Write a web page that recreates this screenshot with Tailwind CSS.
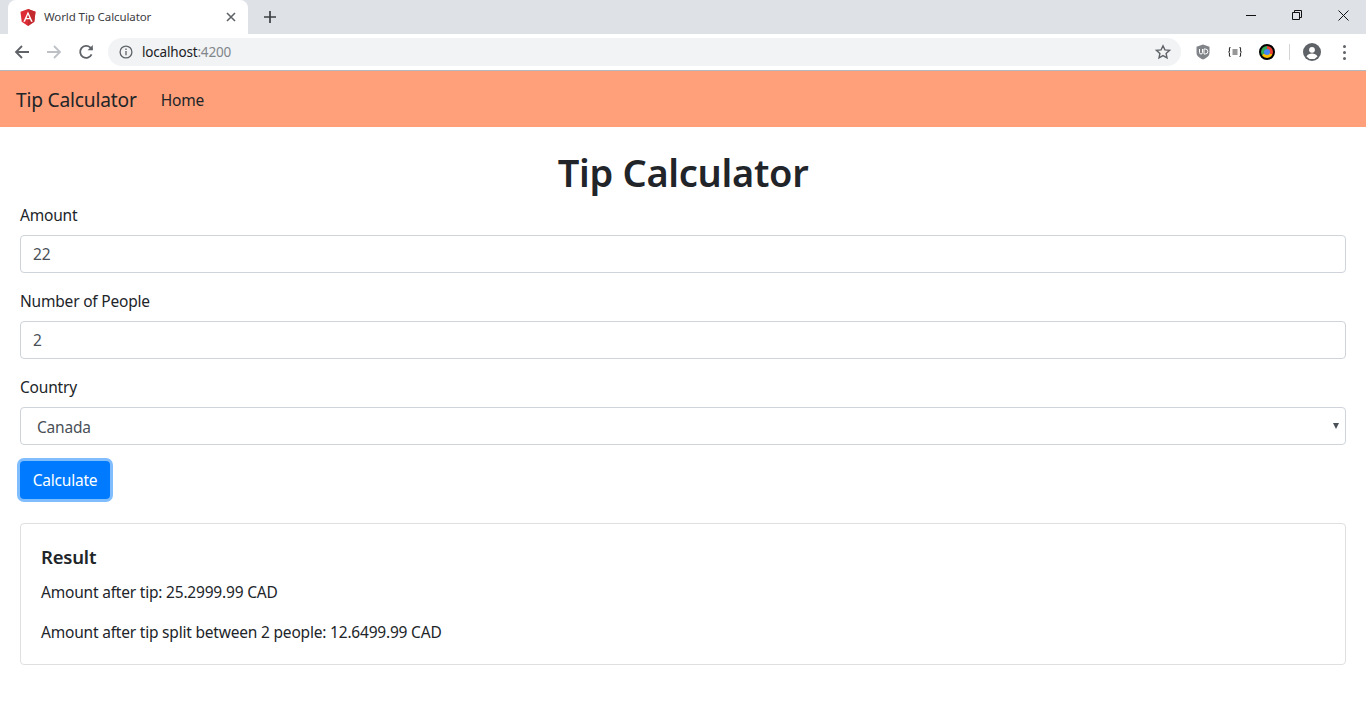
<!DOCTYPE html>
<html lang="en">
<head>
    <meta charset="UTF-8">
    <title>World Tip Calculator</title>
    <script src="https://cdn.jsdelivr.net/npm/@tailwindcss/browser@4"></script>
</head>
<body class="bg-white font-['Noto_Sans',sans-serif] text-[#212529] overflow-hidden">
    <!-- browser tab strip -->
    <div class="h-[34px] bg-[#dee1e6] flex items-start pl-2">
        <div class="w-[240px] h-[34px] bg-white rounded-t-lg flex items-center pl-3 pr-[9px]">
            <svg class="w-4 h-[17px] shrink-0" viewBox="0 0 16 17">
                <path d="M8 0 L15.5 2.7 L14.3 12.7 L8 17 L1.700 12.7 L.5 2.7Z" fill="#dd2c35"/>
                <path d="M8 0 L15.5 2.7 L14.3 12.7 L8 17Z" fill="#c22a30"/>
                <path d="M8 2.400 L3.300 12.800 H5 L6 10.300 H10 L11 12.800 H12.700Z M6.700 8.900 L8 5.600 L9.300 8.900Z" fill="#fff" fill-rule="evenodd"/>
            </svg>
            <span class="ml-2 text-[11.5px] tracking-[-0.1px] text-[#3c4043] flex-1 whitespace-nowrap">World Tip Calculator</span>
            <svg class="w-4 h-4" viewBox="0 0 16 16" fill="none" stroke="#5f6368" stroke-width="1.6"><path d="M4 4l8 8M12 4l-8 8"/></svg>
        </div>
        <svg class="w-4 h-4 ml-[14px] mt-[9px]" viewBox="0 0 16 16" fill="none" stroke="#3c4043" stroke-width="1.7"><path d="M8 2v12M2 8h12"/></svg>
        <div class="ml-auto flex items-start">
            <div class="w-[46px] h-[30px] flex items-center justify-center"><svg class="w-[10px] h-[10px]" viewBox="0 0 10 10" stroke="#111" fill="none"><path d="M0 5.500h10"/></svg></div>
            <div class="w-[46px] h-[30px] flex items-center justify-center"><svg class="w-[10px] h-[10px]" viewBox="0 0 10 10" stroke="#111" fill="none"><path d="M.5 2.500h7v7h-7zM2.500 2.500v-2h7v7h-2"/></svg></div>
            <div class="w-[46px] h-[30px] flex items-center justify-center"><svg class="w-[11px] h-[11px]" viewBox="0 0 11 11" stroke="#111" fill="none"><path d="M.5.5l10 10M10.500.5l-10 10"/></svg></div>
        </div>
    </div>

    <!-- browser toolbar -->
    <div class="h-[37px] bg-white border-b border-[#b6b8bb] flex items-center">
        <svg class="w-4 h-4 ml-[14px]" viewBox="0 0 16 16" fill="none" stroke="#5f6368" stroke-width="1.8"><path d="M15 8H2M8 2L2 8l6 6"/></svg>
        <svg class="w-4 h-4 ml-4" viewBox="0 0 16 16" fill="none" stroke="#bdc1c6" stroke-width="1.8"><path d="M1 8h13M8 2l6 6-6 6"/></svg>
        <svg class="w-4 h-4 ml-4" viewBox="0 0 16 16" fill="none" stroke="#5f6368" stroke-width="1.8"><path d="M13.600 10.400A6 6 0 1 1 12.400 3.600L14.500 5.600"/><path d="M14.800 1v5.200H9.600" stroke="none" fill="#5f6368"/></svg>
        <div class="ml-[14px] w-[1073px] h-7 shrink-0 rounded-full bg-[#f1f3f4] flex items-center pl-[11px] pr-[10px]">
            <svg class="w-[14px] h-[14px]" viewBox="0 0 14 14" fill="none" stroke="#5f6368" stroke-width="1.3"><circle cx="7" cy="7" r="5.900"/><path d="M7 6v4.200M7 3.600v1.300"/></svg>
            <span class="ml-[9px] text-[13.5px] tracking-[-0.18px] text-[#202124]">localhost<span class="text-[#80868b]">:4200</span></span>
            <svg class="w-4 h-4 ml-auto" viewBox="0 0 16 16" fill="none" stroke="#5f6368" stroke-width="1.4"><path d="M8 1.800l1.900 4.100 4.500.5-3.300 3 .9 4.400L8 11.600l-4 2.200.9-4.400-3.300-3 4.500-.5z"/></svg>
        </div>
        <svg class="w-[14px] h-4 ml-[15px] shrink-0" viewBox="0 0 14 16"><path d="M7 .5l6.500 2.200v6c0 3-3 5.500-6.500 6.800C3.500 14.200.5 11.700.5 8.700v-6z" fill="#808488"/><path d="M3.500 5v3.500a1.500 1.500 0 0 0 3 0V5M8 5v5h1.300a2.500 2.500 0 0 0 0-5z" fill="none" stroke="#fff" stroke-width="1"/></svg>
        <svg class="w-[14px] h-[10px] ml-[18px] mr-[2px] shrink-0" viewBox="0 0 14 10" fill="none" stroke="#333" stroke-width="1.100"><path d="M2.500.5C1 .5 1.500 2 1.500 3.500S.3 5 .3 5s1.200 0 1.200 1.500S1 9.500 2.500 9.500M11.500.5c1.500 0 1 1.500 1 3s1.200 1.500 1.200 1.500-1.200 0-1.200 1.500 .5 3-1 3M4.500 3h5M4.500 5h5M4.500 7h5"/></svg>
        <div class="ml-[15px] w-4 h-4 shrink-0 rounded-full bg-[conic-gradient(#ea4335_0_33%,#fbbc05_33%_66%,#34a853_66%_100%)] border-2 border-black flex items-center justify-center"><div class="w-[6px] h-[6px] rounded-full bg-[#4285f4]"></div></div>
        <div class="ml-[14px] w-px h-4 shrink-0 bg-[#d3d5d7]"></div>
        <svg class="w-[18px] h-[18px] ml-[13px] shrink-0" viewBox="0 0 18 18"><circle cx="9" cy="9" r="9" fill="#5f6368"/><circle cx="9" cy="6.800" r="2.900" fill="#fff"/><path d="M3.500 13.400c1.200-2 3.300-2.900 5.500-2.900s4.300.9 5.500 2.900a7 7 0 0 1-11 0z" fill="#fff"/></svg>
        <div class="ml-[22px] flex flex-col gap-[3px] shrink-0">
            <div class="w-[3px] h-[3px] rounded-full bg-[#5f6368]"></div>
            <div class="w-[3px] h-[3px] rounded-full bg-[#5f6368]"></div>
            <div class="w-[3px] h-[3px] rounded-full bg-[#5f6368]"></div>
        </div>
    </div>

    <!-- navbar -->
    <nav class="h-[56px] bg-[#ffa07a] flex items-center px-4 pt-[2px] text-[15.5px] tracking-[-0.2px]">
        <a class="text-[19.2px] tracking-[-0.2px] mr-4">Tip Calculator</a>
        <a class="px-2 pt-[2px]">Home</a>
    </nav>

    <!-- page -->
    <main class="px-5 pt-5 text-[15.500px] tracking-[-0.2px]">
        <h1 class="text-[38px] tracking-[-0.3px] leading-[50px] font-semibold text-center mb-[6px]">Tip Calculator</h1>

        <div class="mb-4">
            <label class="block mb-2 leading-6">Amount</label>
            <input type="text" value="22" class="w-full h-[38px] px-3 border border-[#ced4da] rounded text-[#495057] bg-white">
        </div>
        <div class="mb-4">
            <label class="block mb-2 leading-6">Number of People</label>
            <input type="text" value="2" class="w-full h-[38px] px-3 border border-[#ced4da] rounded text-[#495057] bg-white">
        </div>
        <div class="mb-4">
            <label class="block mb-2 leading-6">Country</label>
            <div class="relative h-[38px] border border-[#ced4da] rounded flex items-center pl-4 pt-[3px] text-[#495057]">
                Canada
                <div class="absolute right-[6px] top-[15px] w-0 h-0 border-x-[3.5px] border-x-transparent border-t-[6px] border-t-[#495057]"></div>
            </div>
        </div>

        <button class="h-[38px] w-[90px] pt-[2px] rounded bg-[#007bff] text-white ring-[3px] ring-[#80bdff]">Calculate</button>

        <section class="mt-6 border border-[#dfdfdf] rounded p-5">
            <h5 class="text-[18.5px] leading-6 pt-px font-semibold mb-[11px]">Result</h5>
            <p class="leading-6 mb-4">Amount after tip: 25.2999.99 CAD</p>
            <p class="leading-6">Amount after tip split between 2 people: 12.6499.99 CAD</p>
        </section>
    </main>
</body>
</html>
